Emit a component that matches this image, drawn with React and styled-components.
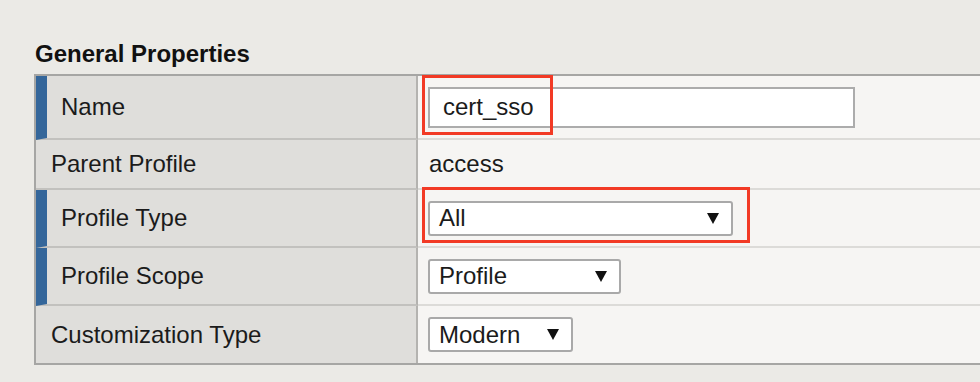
import styled, { createGlobalStyle } from "styled-components";

const GlobalStyle = createGlobalStyle`
  body {
    margin: 0;
    background: #ebeae6;
    font-family: "Liberation Sans", Arial, sans-serif;
    overflow: hidden;
  }
`;

const Page = styled.div`
  padding: 40px 0 0 34px;
  height: 382px;
  box-sizing: border-box;
`;

const Heading = styled.h2`
  margin: 0 0 6px 1px;
  font-size: 24px;
  line-height: 28px;
  font-weight: bold;
  color: #111;
`;

const Table = styled.div`
  margin-right: -20px;
  border: 2px solid #a6a6a4;
  border-right: none;
`;

const Row = styled.div`
  display: grid;
  grid-template-columns: 382px 1fr;
  height: ${(p) => p.$height}px;
`;

const Label = styled.div`
  display: flex;
  align-items: center;
  background: #dfdedb;
  border-right: 2px solid #b4b3b0;
  border-bottom: ${(p) => (p.$last ? "none" : "2px solid #c2c1be")};
  border-left: ${(p) => (p.$required ? "11px solid #34669a" : "none")};
  padding-left: ${(p) => (p.$required ? "14px" : "15px")};
  font-size: 24px;
  color: #1b1b1b;
`;

const Value = styled.div`
  position: relative;
  display: flex;
  align-items: center;
  background: #f6f5f3;
  border-bottom: ${(p) => (p.$last ? "none" : "2px solid #dcdbd8")};
  padding-left: 10px;
  font-size: 24px;
  color: #1b1b1b;
`;

const PlainText = styled.span`
  padding-left: 1px;
`;

const TextInput = styled.div`
  width: 427px;
  height: 41px;
  box-sizing: border-box;
  border: 2px solid #acacac;
  background: #fff;
  display: flex;
  align-items: center;
  padding-left: 13px;
`;

const Select = styled.div`
  width: ${(p) => p.$width}px;
  height: 35px;
  box-sizing: border-box;
  border: 2px solid #a9a9a9;
  border-radius: 3px;
  background: #fff;
  display: flex;
  align-items: center;
  justify-content: space-between;
  padding: 0 12px 0 9px;
`;

const Highlight = styled.div`
  position: absolute;
  left: ${(p) => p.$left}px;
  top: ${(p) => p.$top}px;
  width: ${(p) => p.$width}px;
  height: ${(p) => p.$h}px;
  box-sizing: border-box;
  border: 3px solid #f23a25;
  pointer-events: none;
`;

const Arrow = () => (
  <svg width="12" height="11" viewBox="0 0 12 11">
    <path d="M0 0 H12 L6 11 Z" fill="#111" />
  </svg>
);

export default function App() {
  return (
    <>
      <GlobalStyle />
      <Page>
        <Heading>General Properties</Heading>
        <Table>
          <Row $height={64}>
            <Label $required>Name</Label>
            <Value>
              <TextInput>cert_sso</TextInput>
              <Highlight $left={4} $top={-1} $width={131} $h={60} />
            </Value>
          </Row>
          <Row $height={50}>
            <Label>Parent Profile</Label>
            <Value>
              <PlainText>access</PlainText>
            </Value>
          </Row>
          <Row $height={58}>
            <Label $required>Profile Type</Label>
            <Value>
              <Select $width={305}>
                All
                <Arrow />
              </Select>
              <Highlight $left={4} $top={-3} $width={328} $h={56} />
            </Value>
          </Row>
          <Row $height={58}>
            <Label $required>Profile Scope</Label>
            <Value>
              <Select $width={193}>
                Profile
                <Arrow />
              </Select>
            </Value>
          </Row>
          <Row $height={57}>
            <Label $last>Customization Type</Label>
            <Value $last>
              <Select $width={145}>
                Modern
                <Arrow />
              </Select>
            </Value>
          </Row>
        </Table>
      </Page>
    </>
  );
}
